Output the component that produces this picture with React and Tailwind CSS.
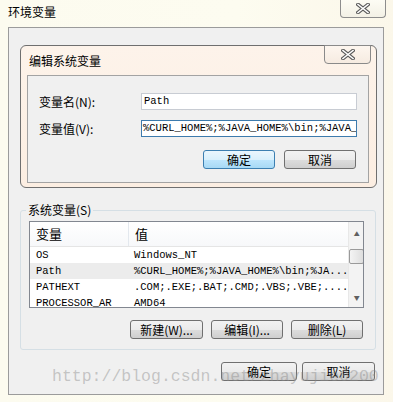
const cjk = { fontFamily: '"Noto Sans CJK SC", "Noto Sans", sans-serif' };
const mono = { fontFamily: '"Liberation Mono", "Noto Sans CJK SC", monospace' };

function CloseGlyph() {
  return (
    <svg width="14" height="11" viewBox="0 0 14 11">
      <path d="M2 1.5 L12 9.5 M12 1.5 L2 9.5" stroke="#5b5b5b" strokeWidth="3.6" strokeLinecap="square" fill="none" />
      <path d="M2 1.5 L12 9.5 M12 1.5 L2 9.5" stroke="#ffffff" strokeWidth="1.6" strokeLinecap="square" fill="none" />
    </svg>
  );
}

function WinButton({ children, width, primary }) {
  return (
    <button
      className={`h-[19px] ${width} flex items-center justify-center rounded-[3px] border text-[12px] leading-none text-black ${
        primary
          ? "border-[#3c7fb1] bg-[linear-gradient(#eaf6fd_0%,#d9f0fc_50%,#bee6fd_51%,#a7d9f5_100%)]"
          : "border-[#707070] bg-[linear-gradient(#f2f2f2_0%,#ebebeb_50%,#dddddd_51%,#cfcfcf_100%)]"
      }`}
    >
      {children}
    </button>
  );
}

const rows = [
  { name: "OS", value: "Windows_NT" },
  { name: "Path", value: "%CURL_HOME%;%JAVA_HOME%\\bin;%JA...", selected: true },
  { name: "PATHEXT", value: ".COM;.EXE;.BAT;.CMD;.VBS;.VBE;...." },
  { name: "PROCESSOR_AR", value: "AMD64" },
];

export default function App() {
  return (
    <div
      className="relative w-[393px] h-[402px] overflow-hidden bg-[linear-gradient(90deg,#fcfbef_0%,#fdfcf0_60%,#fbf7ea_100%)] text-black"
      style={cjk}
    >
      {/* title bar */}
      <div className="h-[27px] flex justify-between items-start">
        <span className="pl-[8px] pt-[4px] text-[12px] leading-[16px]">环境变量</span>
        <div className="mr-[7px] w-[46px] h-[18px] flex items-center justify-center rounded-b-[4px] border border-t-0 border-[#8d8d8d] bg-[linear-gradient(#fdfcf4,#f3f1e6)]">
          <CloseGlyph />
        </div>
      </div>

      {/* gray panel */}
      <div className="ml-[8px] w-[376px] h-[368px] border border-[#9b9b9b] bg-[#f0f0f0] flex flex-col">
        {/* edit dialog */}
        <div className="ml-[11px] mt-[17px] w-[357px] h-[143px] rounded-[6px] border border-[#6f6f6f] bg-[linear-gradient(#fdf3ea,#fceee2)] flex flex-col">
          <div className="h-[29px] flex justify-between items-start">
            <span className="pl-[8px] pt-[7px] text-[12px] leading-[16px]">编辑系统变量</span>
            <div className="-mt-[1px] mr-[5px] w-[47px] h-[19px] flex items-center justify-center rounded-b-[4px] border border-[#8a8a8a] bg-[linear-gradient(#fdf6ef,#f6ebe1)]">
              <CloseGlyph />
            </div>
          </div>
          <div className="ml-[6px] w-[342px] h-[108px] border border-[#a3a3a3] bg-[#f0f0f0] flex flex-col pt-[17px] pl-[11px] pr-[11px]">
            <div className="flex items-center h-[17px]">
              <span className="w-[102px] text-[12px] leading-none">变量名(N):</span>
              <div className="w-[216px] h-[17px] border border-[#c8ccd3] bg-white flex items-center px-[2px] text-[10.5px] leading-none" style={mono}>
                Path
              </div>
            </div>
            <div className="flex items-center h-[17px] mt-[10px]">
              <span className="w-[102px] text-[12px] leading-none">变量值(V):</span>
              <div className="w-[216px] h-[17px] border border-[#3d7bad] bg-white flex items-center px-[1px] text-[10.5px] leading-none overflow-hidden whitespace-nowrap" style={mono}>
                %CURL_HOME%;%JAVA_HOME%\bin;%JAVA_HOME%
              </div>
            </div>
            <div className="flex justify-end gap-[9px] mt-[13px] pr-[1px]">
              <WinButton width="w-[72px]" primary>确定</WinButton>
              <WinButton width="w-[72px]">取消</WinButton>
            </div>
          </div>
        </div>

        {/* system variables group */}
        <div className="ml-[11px] mt-[22px] w-[356px] h-[140px] rounded-[3px] border border-[#d5dfe5] flex flex-col">
          <span className="-mt-[8px] ml-[5px] px-[2px] w-fit h-[14px] bg-[#f0f0f0] text-[12px] leading-[14px]">系统变量(S)</span>
          <div className="ml-[8px] mt-[4px] w-[335px] h-[87px] border border-[#828790] bg-white flex overflow-hidden">
            <div className="flex-1 flex flex-col">
              <div className="h-[25px] shrink-0 flex border-b border-[#e5e5e5] bg-[linear-gradient(#ffffff,#f7f8fa)] text-[13px]">
                <span className="w-[99px] pl-[6px] flex items-center border-r border-[#e3e8ee]">变量</span>
                <span className="pl-[6px] flex items-center">值</span>
              </div>
              {rows.map((r) => (
                <div
                  key={r.name}
                  className={`h-[16px] shrink-0 flex items-center text-[10.5px] leading-none whitespace-nowrap ${r.selected ? "bg-[#ececec]" : ""}`}
                  style={mono}
                >
                  <span className="w-[99px] pl-[6px]">{r.name}</span>
                  <span className="pl-[5px]">{r.value}</span>
                </div>
              ))}
            </div>
            <div className="w-[17px] bg-[#f3f3f3] border-l border-[#e8e8e8] flex flex-col items-center">
              <span className="mt-[9px] text-[6px] leading-none text-[#606060]">▲</span>
              <div className="mt-[12px] w-[15px] h-[15px] rounded-[2px] border border-[#9a9a9a] bg-[linear-gradient(90deg,#f4f4f4,#dedede)]" />
              <span className="mt-[31px] text-[6px] leading-none text-[#606060]">▼</span>
            </div>
          </div>
          <div className="flex justify-end gap-[8px] mt-[12px] pr-[12px]">
            <WinButton width="w-[73px]">新建(W)...</WinButton>
            <WinButton width="w-[72px]">编辑(I)...</WinButton>
            <WinButton width="w-[72px]">删除(L)</WinButton>
          </div>
        </div>

        <div className="flex justify-end gap-[5px] mt-[12px] pr-[8px]">
          <WinButton width="w-[76px]">确定</WinButton>
          <WinButton width="w-[73px]">取消</WinButton>
        </div>
      </div>

      {/* watermark */}
      <div
        className="absolute left-[52px] top-[366px] text-[16.5px] leading-[22px] text-[rgba(140,140,140,0.45)] pointer-events-none whitespace-nowrap"
        style={mono}
      >
        http://blog.csdn.net/zhayujie0200
      </div>
    </div>
  );
}
